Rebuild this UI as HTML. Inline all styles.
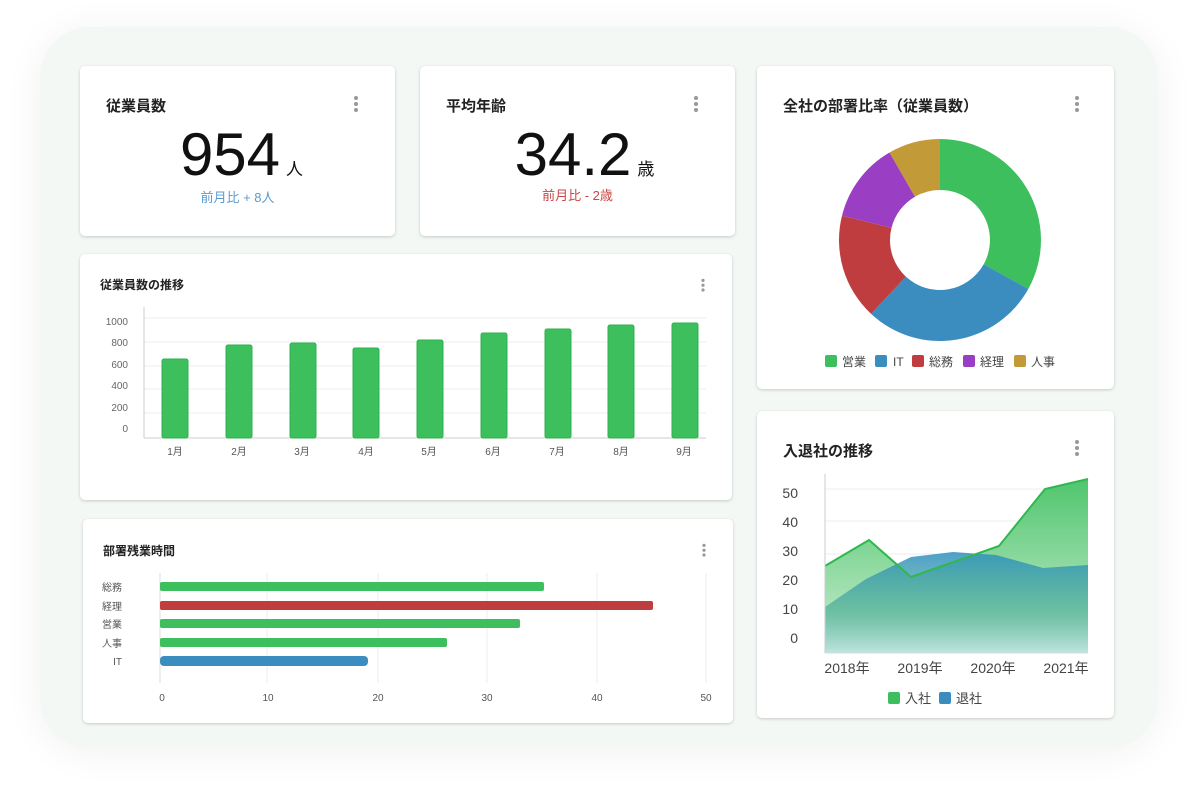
<!DOCTYPE html>
<html><head><meta charset="utf-8"><style>
body{margin:0;width:1200px;height:801px;background:#fff;position:relative;overflow:hidden;font-family:"Liberation Sans","Noto Sans CJK JP",sans-serif;}
.panel{position:absolute;left:40px;top:27px;width:1118px;height:721px;border-radius:50px;background:#f3f8f4;box-shadow:0 4px 40px rgba(0,0,0,0.06);}
.card{position:absolute;background:#fff;border-radius:5px;box-shadow:0 1px 3px rgba(0,0,0,0.18);}
.t{position:absolute;font-weight:bold;color:#222;}
.dots{position:absolute;width:4px;}
.dots i{display:block;width:4px;height:4px;border-radius:2px;background:#999;margin-bottom:2px;}
svg{position:absolute;left:0;top:0;}
</style></head><body>
<div class="panel"></div>
<div class="card" style="left:80px;top:66px;width:315px;height:170px"></div>
<div class="card" style="left:420px;top:66px;width:315px;height:170px"></div>
<div class="card" style="left:757px;top:66px;width:357px;height:323px"></div>
<div class="card" style="left:80px;top:254px;width:652px;height:246px"></div>
<div class="card" style="left:83px;top:519px;width:650px;height:204px"></div>
<div class="card" style="left:757px;top:411px;width:357px;height:307px"></div>

<div class="t" style="left:106px;top:95px;font-size:15px">従業員数</div>
<div class="t" style="left:446px;top:95px;font-size:15px">平均年齢</div>
<div class="t" style="left:783px;top:95px;font-size:15px">全社の部署比率（従業員数）</div>
<div class="t" style="left:100px;top:276px;font-size:12px">従業員数の推移</div>
<div class="t" style="left:103px;top:542px;font-size:12px">部署残業時間</div>
<div class="t" style="left:783px;top:440px;font-size:15px">入退社の推移</div>

<div class="dots" style="left:354px;top:96px"><i></i><i></i><i></i></div>
<div class="dots" style="left:694px;top:96px"><i></i><i></i><i></i></div>
<div class="dots" style="left:1075px;top:96px"><i></i><i></i><i></i></div>
<div class="dots" style="left:701px;top:277px;transform:scale(.8)"><i></i><i></i><i></i></div>
<div class="dots" style="left:702px;top:542px;transform:scale(.8)"><i></i><i></i><i></i></div>
<div class="dots" style="left:1075px;top:440px"><i></i><i></i><i></i></div>

<div style="position:absolute;left:80px;width:315px;top:120px;text-align:center;color:#111;font-size:60px;line-height:70px;padding-left:8px;box-sizing:border-box">954<span style="font-size:17px;margin-left:6px">人</span></div>
<div style="position:absolute;left:80px;width:315px;top:187px;text-align:center;color:#5a9bcf;font-size:13px">前月比 + 8人</div>
<div style="position:absolute;left:420px;width:315px;top:120px;text-align:center;color:#111;font-size:60px;line-height:70px;padding-left:14px;box-sizing:border-box">34.2<span style="font-size:17px;margin-left:6px">歳</span></div>
<div style="position:absolute;left:420px;width:315px;top:185px;text-align:center;color:#cc4444;font-size:13px">前月比 - 2歳</div>

<svg width="1200" height="801" font-family="Liberation Sans, Noto Sans CJK JP, sans-serif">
<!-- bar chart -->
<g stroke="#eee" stroke-width="1">
<line x1="144" y1="318" x2="706" y2="318"/><line x1="144" y1="342" x2="706" y2="342"/><line x1="144" y1="366" x2="706" y2="366"/><line x1="144" y1="389" x2="706" y2="389"/><line x1="144" y1="413" x2="706" y2="413"/>
</g>
<line x1="144" y1="307" x2="144" y2="438" stroke="#ccc"/>
<line x1="144" y1="438" x2="706" y2="438" stroke="#ccc"/>
<g font-size="10" fill="#666" text-anchor="end">
<text x="128" y="325">1000</text><text x="128" y="346">800</text><text x="128" y="368">600</text><text x="128" y="389">400</text><text x="128" y="411">200</text><text x="128" y="432">0</text>
</g>
<g fill="#3dbf5d" stroke="#2fb14f" stroke-width="1">
<rect x="162" y="359" width="26" height="79" rx="2"/>
<rect x="226" y="345" width="26" height="93" rx="2"/>
<rect x="290" y="343" width="26" height="95" rx="2"/>
<rect x="353" y="348" width="26" height="90" rx="2"/>
<rect x="417" y="340" width="26" height="98" rx="2"/>
<rect x="481" y="333" width="26" height="105" rx="2"/>
<rect x="545" y="329" width="26" height="109" rx="2"/>
<rect x="608" y="325" width="26" height="113" rx="2"/>
<rect x="672" y="323" width="26" height="115" rx="2"/>
</g>
<g font-size="10" fill="#555" text-anchor="middle">
<text x="175" y="455">1月</text><text x="239" y="455">2月</text><text x="302" y="455">3月</text><text x="366" y="455">4月</text><text x="429" y="455">5月</text><text x="493" y="455">6月</text><text x="557" y="455">7月</text><text x="621" y="455">8月</text><text x="684" y="455">9月</text>
</g>
<!-- horizontal bars -->
<g stroke="#eee"><line x1="267" y1="573" x2="267" y2="683"/><line x1="378" y1="573" x2="378" y2="683"/><line x1="487" y1="573" x2="487" y2="683"/><line x1="597" y1="573" x2="597" y2="683"/><line x1="706" y1="573" x2="706" y2="683"/></g>
<line x1="160" y1="573" x2="160" y2="683" stroke="#ddd"/>
<rect x="160" y="582" width="384" height="9" rx="2" fill="#3dbf5d"/>
<rect x="160" y="601" width="493" height="9" rx="2" fill="#c03d3f"/>
<rect x="160" y="619" width="360" height="9" rx="2" fill="#3dbf5d"/>
<rect x="160" y="638" width="287" height="9" rx="2" fill="#3dbf5d"/>
<rect x="160" y="656" width="208" height="10" rx="4" fill="#3b8dc0"/>
<g font-size="10" fill="#555" text-anchor="end">
<text x="122" y="591">総務</text><text x="122" y="610">経理</text><text x="122" y="628">営業</text><text x="122" y="647">人事</text><text x="122" y="665">IT</text>
</g>
<g font-size="10" fill="#555" text-anchor="middle">
<text x="162" y="701">0</text><text x="268" y="701">10</text><text x="378" y="701">20</text><text x="487" y="701">30</text><text x="597" y="701">40</text><text x="706" y="701">50</text>
</g>
<!-- donut -->
<g transform="translate(940,240)">
<path d="M0,-101 A101,101 0 0 1 88.3,49 L43.7,24.2 A50,50 0 0 0 0,-50Z" fill="#3dbf5d"/>
<path d="M88.3,49 A101,101 0 0 1 -68.9,73.9 L-34.1,36.6 A50,50 0 0 0 43.7,24.2Z" fill="#3b8dc0"/>
<path d="M-68.9,73.9 A101,101 0 0 1 -98,-24.4 L-48.5,-12.1 A50,50 0 0 0 -34.1,36.6Z" fill="#c03d3f"/>
<path d="M-98,-24.4 A101,101 0 0 1 -50.5,-87.5 L-25,-43.3 A50,50 0 0 0 -48.5,-12.1Z" fill="#9a3fc4"/>
<path d="M-50.5,-87.5 A101,101 0 0 1 0,-101 L0,-50 A50,50 0 0 0 -25,-43.3Z" fill="#c29a38"/>
</g>
<g font-size="12" fill="#444">
<rect x="825" y="355" width="12" height="12" rx="2" fill="#3dbf5d"/><text x="842" y="366">営業</text>
<rect x="875" y="355" width="12" height="12" rx="2" fill="#3b8dc0"/><text x="893" y="366">IT</text>
<rect x="912" y="355" width="12" height="12" rx="2" fill="#c03d3f"/><text x="929" y="366">総務</text>
<rect x="963" y="355" width="12" height="12" rx="2" fill="#9a3fc4"/><text x="980" y="366">経理</text>
<rect x="1014" y="355" width="12" height="12" rx="2" fill="#c29a38"/><text x="1031" y="366">人事</text>
</g>
<!-- area chart -->
<defs>
<linearGradient id="gg" x1="0" y1="0" x2="0" y2="1"><stop offset="0" stop-color="#3dbf5d"/><stop offset="1" stop-color="#c8edd0"/></linearGradient>
<linearGradient id="bg" x1="0" y1="0" x2="0" y2="1"><stop offset="0" stop-color="#2f8fbf"/><stop offset="0.6" stop-color="#3fa690" stop-opacity=".7"/><stop offset="1" stop-color="#bfe3e0"/></linearGradient>
</defs>
<g stroke="#eee"><line x1="825" y1="489" x2="1088" y2="489"/><line x1="825" y1="521" x2="1088" y2="521"/><line x1="825" y1="554" x2="1088" y2="554"/><line x1="825" y1="587" x2="1088" y2="587"/><line x1="825" y1="619" x2="1088" y2="619"/></g>
<path d="M825,566 L869,540 L911,577 L999,546 L1045,489 L1088,479 L1088,653 L825,653Z" fill="url(#gg)" opacity=".9"/>
<path d="M825,607 L866,579 L911,557 L953,552 L996,555 L1043,568 L1088,565 L1088,653 L825,653Z" fill="url(#bg)" opacity=".85"/>
<path d="M825,566 L869,540 L911,577 L999,546 L1045,489 L1088,479" fill="none" stroke="#2fb84f" stroke-width="2"/>
<line x1="825" y1="474" x2="825" y2="653" stroke="#ccc"/>
<line x1="825" y1="653" x2="1088" y2="653" stroke="#cde"/>
<g font-size="14" fill="#444" text-anchor="end">
<text x="798" y="498">50</text><text x="798" y="527">40</text><text x="798" y="556">30</text><text x="798" y="585">20</text><text x="798" y="614">10</text><text x="798" y="643">0</text>
</g>
<g font-size="14" fill="#444" text-anchor="middle">
<text x="847" y="673">2018年</text><text x="920" y="673">2019年</text><text x="993" y="673">2020年</text><text x="1066" y="673">2021年</text>
</g>
<g font-size="13" fill="#444">
<rect x="888" y="692" width="12" height="12" rx="2" fill="#3dbf5d"/><text x="905" y="703">入社</text>
<rect x="939" y="692" width="12" height="12" rx="2" fill="#3b8dc0"/><text x="956" y="703">退社</text>
</g>
</svg>
</body></html>
